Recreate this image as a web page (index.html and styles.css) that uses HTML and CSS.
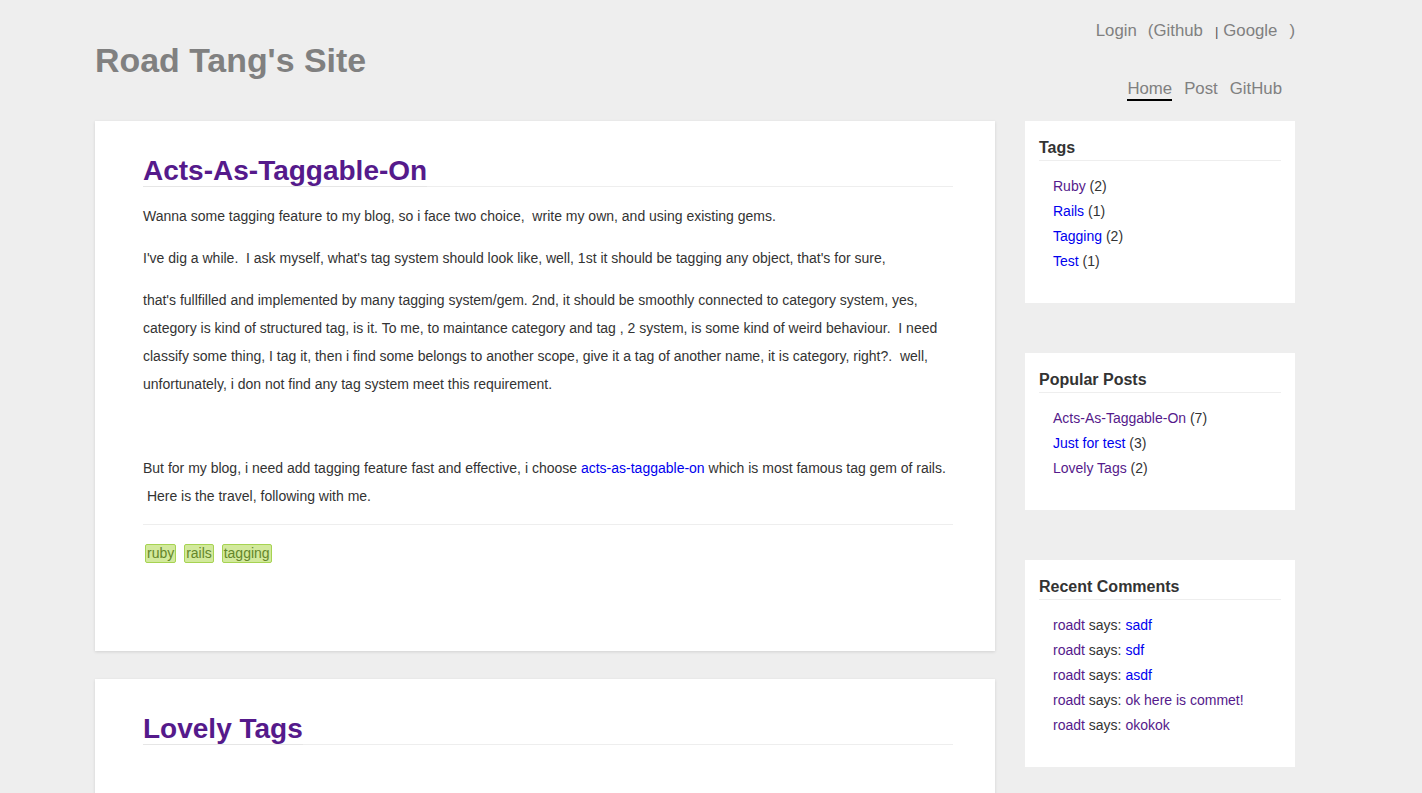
FILE: index.html
```html
<!DOCTYPE html>
<html lang="en">
<head>
<meta charset="utf-8">
<title>Road Tang's Site</title>
<link rel="stylesheet" href="styles.css">
</head>
<body>
<div class="page">
  <header class="header">
    <h1 class="site-title">Road Tang's Site</h1>
    <div class="header-right">
      <div class="login">
        <span class="login-label">Login</span>
        <span class="paren">(</span><a class="login-link" href="#">Github</a>
        <span class="sep">|</span><a class="login-link" href="#">Google</a>
        <span class="paren close">)</span>
      </div>
      <nav class="nav">
        <a class="nav-item active" href="#">Home</a>
        <a class="nav-item" href="#">Post</a>
        <a class="nav-item" href="#">GitHub</a>
      </nav>
    </div>
  </header>

  <div class="layout">
    <main class="posts">
      <article class="card">
        <h2 class="post-title"><a class="visited" href="#">Acts-As-Taggable-On</a></h2>
        <p>Wanna some tagging feature to my blog, so i face two choice,&nbsp; write my own, and using existing gems.</p>
        <p>I've dig a while.&nbsp; I ask myself, what's tag system should look like, well, 1st it should be tagging any object, that's for sure,</p>
        <p>that's fullfilled and implemented by many tagging system/gem. 2nd, it should be smoothly connected to category system, yes, category is kind of structured tag, is it. To me, to maintance category and tag , 2 system, is some kind of weird behaviour.&nbsp; I need classify some thing, I tag it, then i find some belongs to another scope, give it a tag of another name, it is category, right?.&nbsp; well, unfortunately, i don not find any tag system meet this requirement.</p>
        <p>&nbsp;</p>
        <p>But for my blog, i need add tagging feature fast and effective, i choose <a class="link" href="#">acts-as-taggable-on</a> which is most famous tag gem of rails. &nbsp;Here is the travel, following with me.</p>
        <hr class="divider">
        <div class="tags">
          <a class="tag" href="#">ruby</a>
          <a class="tag" href="#">rails</a>
          <a class="tag" href="#">tagging</a>
        </div>
      </article>

      <article class="card">
        <h2 class="post-title"><a class="visited" href="#">Lovely Tags</a></h2>
        <p>&nbsp;</p>
        <p>Tags are lovely, they make everything easy to find.</p>
      </article>
    </main>

    <aside class="sidebar">
      <section class="widget">
        <h3 class="widget-title">Tags</h3>
        <ul class="widget-list">
          <li><a class="visited" href="#">Ruby</a> (2)</li>
          <li><a class="link" href="#">Rails</a> (1)</li>
          <li><a class="link" href="#">Tagging</a> (2)</li>
          <li><a class="link" href="#">Test</a> (1)</li>
        </ul>
      </section>

      <section class="widget">
        <h3 class="widget-title">Popular Posts</h3>
        <ul class="widget-list">
          <li><a class="visited" href="#">Acts-As-Taggable-On</a> (7)</li>
          <li><a class="link" href="#">Just for test</a> (3)</li>
          <li><a class="visited" href="#">Lovely Tags</a> (2)</li>
        </ul>
      </section>

      <section class="widget">
        <h3 class="widget-title">Recent Comments</h3>
        <ul class="widget-list">
          <li><a class="visited" href="#">roadt</a> says: <a class="link" href="#">sadf</a></li>
          <li><a class="visited" href="#">roadt</a> says: <a class="link" href="#">sdf</a></li>
          <li><a class="visited" href="#">roadt</a> says: <a class="link" href="#">asdf</a></li>
          <li><a class="visited" href="#">roadt</a> says: <a class="visited" href="#">ok here is commet!</a></li>
          <li><a class="visited" href="#">roadt</a> says: <a class="visited" href="#">okokok</a></li>
        </ul>
      </section>
    </aside>
  </div>
</div>
</body>
</html>
```

FILE: styles.css
```css
* { box-sizing: border-box; }

html, body {
  margin: 0;
  padding: 0;
  background: #eeeeee;
}

body {
  font-family: "Liberation Sans", Arial, Helvetica, sans-serif;
  font-size: 14px;
  color: #333333;
}

.page {
  width: 1200px;
  margin-left: 95px;
}

/* Header */
.header {
  display: flex;
  justify-content: space-between;
  align-items: flex-start;
  height: 100px;
}

.site-title {
  margin: 40px 0 0 0;
  font-size: 33.9px;
  line-height: 40px;
  font-weight: bold;
  color: #808080;
}

.header-right {
  display: flex;
  flex-direction: column;
  align-items: flex-end;
  padding-top: 21px;
}

.login {
  display: flex;
  align-items: baseline;
  font-size: 16.8px;
  line-height: 20px;
  color: #808080;
}

.login-label { margin-right: 11px; }

.login-link {
  color: #808080;
  text-decoration: none;
}

.sep {
  font-size: 13px;
  color: #555555;
  margin-left: 12px;
  margin-right: 5px;
}

.paren.close { margin-left: 12px; }

.nav {
  display: flex;
  gap: 12px;
  margin-top: 37px;
  margin-right: 13px;
}

.nav-item {
  font-size: 16.8px;
  line-height: 20px;
  color: #808080;
  text-decoration: none;
  border-bottom: 2px solid transparent;
}

.nav-item.active {
  border-bottom-color: #000000;
}

/* Layout */
.layout {
  display: flex;
  gap: 30px;
  margin-top: 21px;
  align-items: flex-start;
}

.posts {
  width: 900px;
  display: flex;
  flex-direction: column;
  gap: 28px;
}

.card {
  background: #ffffff;
  padding: 35px 42px 48px 48px;
  box-shadow: 0 1px 3px rgba(0, 0, 0, 0.12);
}

.post-title {
  margin: 0;
  font-size: 28px;
  line-height: 30px;
  font-weight: bold;
  border-bottom: 1px solid #eeeeee;
}

.post-title a {
  text-decoration: none;
  display: inline-block;
  border-bottom: 1px solid #e6e6e6;
  margin-bottom: -1px;
}

.card p {
  margin: 14px 0;
  line-height: 28px;
}

.card .post-title + p {
  margin-top: 15px;
}

a.visited { color: #551a8b; text-decoration: none; }
a.link { color: #0000ee; text-decoration: none; }

.divider {
  border: 0;
  border-top: 1px solid #eeeeee;
  margin: 14px 0 0 0;
  height: 0;
}

.tags {
  margin-top: 19px;
  margin-bottom: 40px;
  line-height: 19px;
}

.tag {
  display: inline-block;
  margin: 0 2px;
  padding: 0 1px;
  line-height: 17px;
  border: 1px solid #a6d352;
  border-radius: 2px;
  background: #d2e99c;
  color: #65862a;
  text-decoration: none;
}

/* Sidebar */
.sidebar {
  width: 270px;
  display: flex;
  flex-direction: column;
  gap: 50px;
}

.widget {
  background: #ffffff;
  padding: 17px 14px 29px 14px;
}

.widget-title {
  margin: 0;
  font-size: 16px;
  line-height: 20px;
  font-weight: bold;
  color: #333333;
  padding-bottom: 2px;
  border-bottom: 1px solid #eeeeee;
}

.widget-list {
  list-style: none;
  margin: 13px 0 0 0;
  padding: 0 0 0 14px;
}

.widget-list li {
  line-height: 25px;
}
```
